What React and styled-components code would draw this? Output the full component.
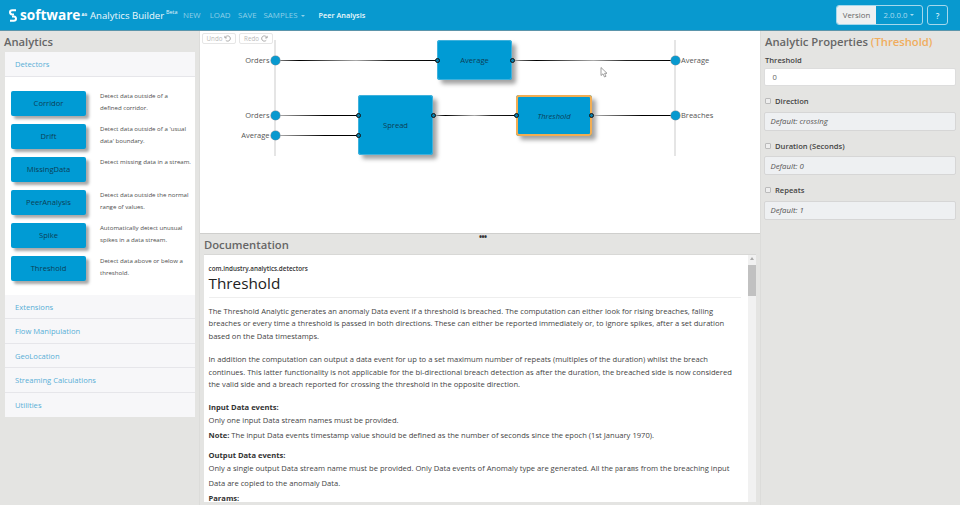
import React from 'react';
import styled, { createGlobalStyle } from 'styled-components';

const Global = createGlobalStyle`
  html, body { margin: 0; padding: 0; width: 960px; height: 505px; overflow: hidden; }
  body { font-family: "Open Sans", "Liberation Sans", sans-serif; background: #e4e4e2; color: #333; }
  * { box-sizing: border-box; }
`;
const Page = styled.div`width:960px;height:505px;display:flex;flex-direction:column;`;
const Header = styled.header`height:31px;flex:none;background:#0899cf;border-bottom:1px solid #5b95ab;display:flex;align-items:center;padding-left:9px;color:#fff;position:relative;`;
const Logo = styled.div`display:flex;align-items:center;width:81px;`;
const LogoWord = styled.span`font-size:13.6px;font-weight:700;margin-left:3px;line-height:30px;`;
const LogoAg = styled.sup`font-size:4px;font-weight:700;margin-left:1px;position:relative;top:-1px;`;
const Brand = styled.span`font-size:9.6px;width:76px;white-space:nowrap;color:#eef8fc;`;
const Beta = styled.sup`font-size:5.4px;width:17px;margin-top:-7px;color:#e5f4fa;`;
const NavItem = styled.span`font-size:7.9px;color:#8fd0e8;margin-right:${p=>p.$gap}px;white-space:nowrap;`;
const Caret = styled.i`display:inline-block;border:2.5px solid transparent;border-top-color:currentColor;border-bottom:0;margin-left:3px;vertical-align:1px;`;
const Title = styled.span`font-size:7.3px;color:#f0f9fc;font-weight:600;`;
const HeaderEnd = styled.div`margin-left:auto;display:flex;gap:4px;padding-right:12px;`;
const VersionGroup = styled.div`display:flex;height:20px;width:87px;border:1px solid #a4d8ec;border-radius:3px;overflow:hidden;font-size:7.8px;`;
const VersionLabel = styled.span`width:39px;background:#eef0f1;color:#666;display:flex;align-items:center;justify-content:center;`;
const VersionValue = styled.span`flex:1;color:#a8dcef;display:flex;align-items:center;justify-content:center;`;
const Help = styled.span`width:21px;height:20px;border:1px solid #a4d8ec;border-radius:3px;color:#d4eff8;font-size:8px;font-weight:600;display:flex;align-items:center;justify-content:center;`;
const Body = styled.div`flex:1;display:flex;min-height:0;`;
const Left = styled.aside`width:200px;flex:none;padding:0 4px 0 5px;border-right:1px solid #dcdcda;`;
const PaneTitle = styled.h2`margin:0;font-size:11.25px;font-weight:600;color:#666;line-height:20px;white-space:nowrap;`;
const LeftTitle = styled(PaneTitle)`margin-left:-1px;padding-top:1px;height:21px;`;
const Accordion = styled.div`background:#f7f7f9;`;
const AccHead = styled.div`height:24.5px;padding:1px 0 0 10px;font-size:7.6px;color:#57aed6;display:flex;align-items:center;border-bottom:${p=>p.$last?'0':'1px solid #e6e6ea'};`;
const AccBody = styled.div`background:#fff;padding:14px 5px 0 6px;height:218px;`;
const Row = styled.div`display:flex;height:33px;`;
const Block = styled.div`width:75px;height:25px;padding-bottom:1px;background:#009bd4;border-radius:2px;box-shadow:3px 3px 3px #a8a8a8;color:#0c4056;font-size:7.6px;display:flex;align-items:center;justify-content:center;flex:none;`;
const BlockDesc = styled.div`font-size:6.1px;line-height:12px;color:#4d4d4d;margin-left:14px;margin-top:-1px;white-space:nowrap;`;
const Centre = styled.main`width:560px;flex:none;display:flex;flex-direction:column;`;
const Canvas = styled.section`height:203px;flex:none;background:#fff;position:relative;border-bottom:1px solid #cfcfcd;`;
const Tool = styled.span`position:absolute;top:2px;left:${p=>p.$x}px;width:34px;height:11px;border:1px solid #e6e6e6;border-radius:2px;color:#b8b8b8;font-size:6.2px;display:flex;align-items:center;justify-content:center;gap:2px;`;
const Rail = styled.div`position:absolute;top:9px;left:${p=>p.$x}px;width:2px;height:116px;background:#e5e5e5;`;
const Wires = styled.svg`position:absolute;left:0;top:0;`;
const Node = styled.div`position:absolute;left:${p=>p.$x}px;top:${p=>p.$y}px;width:${p=>p.$w}px;height:${p=>p.$h}px;background:#009bd4;border-radius:3px;box-shadow:inset 0 0 0 ${p=>p.$sel?'2px #f2ad52':'1px #3fb1dc'}, 4px 4px 4px #a4a4a4;color:#0c4056;font-size:7.6px;font-style:${p=>p.$sel?'italic':'normal'};display:flex;align-items:center;justify-content:center;`;
const Port = styled.span`position:absolute;left:${p=>p.$x-2.5}px;top:${p=>p.$y-2.5}px;width:5px;height:5px;border-radius:50%;background:#0a7fab;border:1px solid #111;`;
const Pin = styled.span`position:absolute;left:${p=>p.$x-4.5}px;top:${p=>p.$y-4.5}px;width:9px;height:9px;border-radius:50%;background:#0899cf;box-shadow:0 0 0 .6px #8a9aa4;`;
const PinLabel = styled.span`position:absolute;top:${p=>p.$y-8}px;line-height:14px;font-size:7.5px;color:#555;${p=>p.$right?`left:${p.$x}px;`:`right:${560-p.$x}px;`}`;
const Pointer = styled.svg`position:absolute;left:400px;top:36px;`;
const DocPane = styled.section`flex:1;min-height:0;display:flex;flex-direction:column;padding:0 4px 3px;position:relative;`;
const Grip = styled.span`position:absolute;top:0;left:279px;font-size:8px;line-height:5px;font-weight:700;letter-spacing:-.5px;color:#333;`;
const DocTitle = styled(PaneTitle)`height:20px;line-height:22px;`;
const DocBox = styled.div`flex:1;min-height:0;background:#fff;border-top:1px solid #d8d8d6;display:flex;overflow:hidden;`;
const DocText = styled.article`flex:1;min-width:0;padding:8.5px 0 0 4.5px;overflow:hidden;font-size:7.6px;line-height:12.7px;color:#444;`;
const Pack = styled.div`font-size:6.3px;font-weight:600;line-height:9px;color:#333;`;
const DocH1 = styled.h1`margin:0 6px 6.5px 0;font-size:15.3px;font-weight:400;color:#222;line-height:20px;padding-bottom:4.5px;border-bottom:1px solid #eee;`;
const Para = styled.p`margin:0 0 ${p=>p.$mb??10.3}px;white-space:nowrap;`;
const Strong = styled.b`color:#333;font-weight:700;`;
const Mono = styled.code`font-family:"Liberation Mono",monospace;font-size:6.6px;`;
const Scroll = styled.div`width:8px;flex:none;background:#f1f1f1;margin-left:1px;padding-top:2px;`;
const ScrollArrow = styled.i`display:block;width:0;height:0;margin:0 auto 5px;border:2px solid transparent;border-top:0;border-bottom:3px solid #aaa;`;
const Thumb = styled.div`height:31px;background:#c1c1c1;`;
const Right = styled.aside`flex:1;padding:0 4.5px 0 3px;border-left:1px solid #dcdcda;`;
const RightTitle = styled(PaneTitle)`padding:1px 0 0 1px;height:21px;`;
const Accent = styled.span`color:#f0ad5e;`;
const FieldLabel = styled.label`display:flex;align-items:center;gap:4px;padding-left:1px;font-size:7.6px;font-weight:600;color:#444;height:${p=>p.$h||15}px;`;
const Check = styled.span`width:6px;height:6px;border:1px solid #bbb;border-radius:1px;background:#eee;`;
const Input = styled.div`height:18px;margin-bottom:7.5px;background:#fff;border:1px solid #ddd;border-radius:2px;padding-left:7.5px;font-size:7.6px;color:#666;display:flex;align-items:center;`;
const Default = styled.div`height:19px;margin:3px 0 7.5px;background:#eef0f2;border:1px solid #d6d6d6;border-radius:2px;padding-left:5.5px;font-size:7.8px;font-style:italic;color:#555;display:flex;align-items:center;`;

const blocks = [
  ['Corridor', 'Detect data outside of a', 'defined corridor.'],
  ['Drift', "Detect data outside of a 'usual", "data' boundary."],
  ['MissingData', 'Detect missing data in a stream.'],
  ['PeerAnalysis', 'Detect data outside the normal', 'range of values.'],
  ['Spike', 'Automatically detect unusual', 'spikes in a data stream.'],
  ['Threshold', 'Detect data above or below a', 'threshold.'],
];
const wires = [[75,60,237,'a'],[312,60,475,'a'],[75,115,158,'b'],[75,135,158,'b'],[233,115,316,'a'],[391,115,475,'b']];

const Undo = ({flip}) => (
  <svg width="7" height="7" viewBox="0 0 24 24" fill="none" stroke="#aaa" strokeWidth="3.4" style={flip?{transform:'scaleX(-1)'}:undefined}>
    <path d="M3 3v7h7M4 10a9 9 0 1 1 2 8" />
  </svg>
);

export default function App() {
  return (
    <Page>
      <Global />
      <Header>
        <Logo>
          <svg width="8" height="13" viewBox="0 0 8 13" fill="none" stroke="#fff" strokeWidth="2">
            <path d="M7 1.2H3.2Q1 1.2 1 3.2T3.2 5.4H5" /><path d="M1 11.8H4.8Q7 11.8 7 9.8T4.8 7.6H3" />
          </svg>
          <LogoWord>software</LogoWord><LogoAg>AG</LogoAg>
        </Logo>
        <Brand>Analytics Builder</Brand>
        <Beta>Beta</Beta>
        <NavItem $gap={9}>NEW</NavItem>
        <NavItem $gap={7.5}>LOAD</NavItem>
        <NavItem $gap={7}>SAVE</NavItem>
        <NavItem $gap={14}>SAMPLES<Caret /></NavItem>
        <Title>Peer Analysis</Title>
        <HeaderEnd>
          <VersionGroup>
            <VersionLabel>Version</VersionLabel>
            <VersionValue>2.0.0.0<Caret /></VersionValue>
          </VersionGroup>
          <Help>?</Help>
        </HeaderEnd>
      </Header>
      <Body>
        <Left>
          <LeftTitle>Analytics</LeftTitle>
          <Accordion>
            <AccHead>Detectors</AccHead>
            <AccBody>
              {blocks.map(([name, a, b]) => (
                <Row key={name}>
                  <Block>{name}</Block>
                  <BlockDesc>{a}{b && <br />}{b}</BlockDesc>
                </Row>
              ))}
            </AccBody>
            <AccHead>Extensions</AccHead>
            <AccHead>Flow Manipulation</AccHead>
            <AccHead>GeoLocation</AccHead>
            <AccHead>Streaming Calculations</AccHead>
            <AccHead $last>Utilities</AccHead>
          </Accordion>
        </Left>
        <Centre>
          <Canvas>
            <Tool $x={2}>Undo <Undo /></Tool>
            <Tool $x={39}>Redo <Undo flip /></Tool>
            <Rail $x={74} />
            <Rail $x={474} />
            <Wires width="560" height="203" viewBox="0 31 560 203">
              <defs>
                <linearGradient id="wa"><stop offset="0" stopColor="#999" /><stop offset=".15" stopColor="#000" /><stop offset=".5" stopColor="#aaa" /><stop offset=".7" stopColor="#222" /><stop offset="1" stopColor="#000" /></linearGradient>
                <linearGradient id="wb"><stop offset="0" stopColor="#bbb" /><stop offset=".6" stopColor="#000" /><stop offset="1" stopColor="#000" /></linearGradient>
              </defs>
              {wires.map(([x1,y,x2,k],i) => (
                <rect key={i} x={x1} y={y} width={x2-x1} height="1" fill={`url(#w${k})`} />
              ))}
            </Wires>
            <Node $x={237} $y={9} $w={75} $h={40}>Average</Node>
            <Node $x={158} $y={64} $w={75} $h={60}>Spread</Node>
            <Node $x={316} $y={64} $w={76} $h={41} $sel>Threshold</Node>
            {[[237.5,29.5],[312.5,29.5],[158.5,84.5],[158.5,104.5],[233.5,84.5],[316.5,84.5],[391.5,84.5]].map(([x,y],i)=>(<Port key={i} $x={x} $y={y} />))}
            {[[75,29.5],[75,84.5],[75,104.5],[475,29.5],[475,84.5]].map(([x,y],i)=>(<Pin key={i} $x={x} $y={y} />))}
            <PinLabel $x={69.5} $y={29.5}>Orders</PinLabel>
            <PinLabel $x={69.5} $y={84.5}>Orders</PinLabel>
            <PinLabel $x={69.5} $y={104.5}>Average</PinLabel>
            <PinLabel $right $x={481} $y={29.5}>Average</PinLabel>
            <PinLabel $right $x={481} $y={84.5}>Breaches</PinLabel>
            <Pointer width="8" height="11" viewBox="0 0 8 11">
              <path d="M1 .5V8.5L3 6.8L4.5 10L6 9.3L4.6 6.3H7Z" fill="#fff" stroke="#888" strokeWidth=".8" />
            </Pointer>
          </Canvas>
          <DocPane>
            <Grip>•••</Grip>
            <DocTitle>Documentation</DocTitle>
            <DocBox>
              <DocText>
                <Pack>com.industry.analytics.detectors</Pack>
                <DocH1>Threshold</DocH1>
                <Para>
                  The Threshold Analytic generates an anomaly Data event if a threshold is breached. The computation can either look for rising breaches, falling<br />
                  breaches or every time a threshold is passed in both directions. These can either be reported immediately or, to ignore spikes, after a set duration<br />
                  based on the Data timestamps.
                </Para>
                <Para $mb={10}>
                  In addition the computation can output a data event for up to a set maximum number of repeats (multiples of the duration) whilst the breach<br />
                  continues. This latter functionality is not applicable for the bi-directional breach detection as after the duration, the breached side is now considered<br />
                  the valid side and a breach reported for crossing the threshold in the opposite direction.
                </Para>
                <Para $mb={2.3}><Strong>Input Data events:</Strong><br />Only one input Data stream names must be provided.</Para>
                <Para $mb={7.8}><Strong>Note:</Strong> The input Data events timestamp value should be defined as the number of seconds since the epoch (1st January 1970).</Para>
                <Para $mb={2.8}>
                  <Strong>Output Data events:</Strong><br />
                  Only a single output Data stream name must be provided. Only Data events of Anomaly type are generated. All the <Mono>params</Mono> from the breaching input<br />
                  Data are copied to the anomaly Data.
                </Para>
                <Para><Strong>Params:</Strong></Para>
              </DocText>
              <Scroll><ScrollArrow /><Thumb /></Scroll>
            </DocBox>
          </DocPane>
        </Centre>
        <Right>
          <RightTitle>Analytic Properties <Accent>(Threshold)</Accent></RightTitle>
          <FieldLabel $h={16}>Threshold</FieldLabel>
          <Input>0</Input>
          <FieldLabel><Check />Direction</FieldLabel>
          <Default>Default: crossing</Default>
          <FieldLabel><Check />Duration (Seconds)</FieldLabel>
          <Default>Default: 0</Default>
          <FieldLabel><Check />Repeats</FieldLabel>
          <Default>Default: 1</Default>
        </Right>
      </Body>
    </Page>
  );
}
